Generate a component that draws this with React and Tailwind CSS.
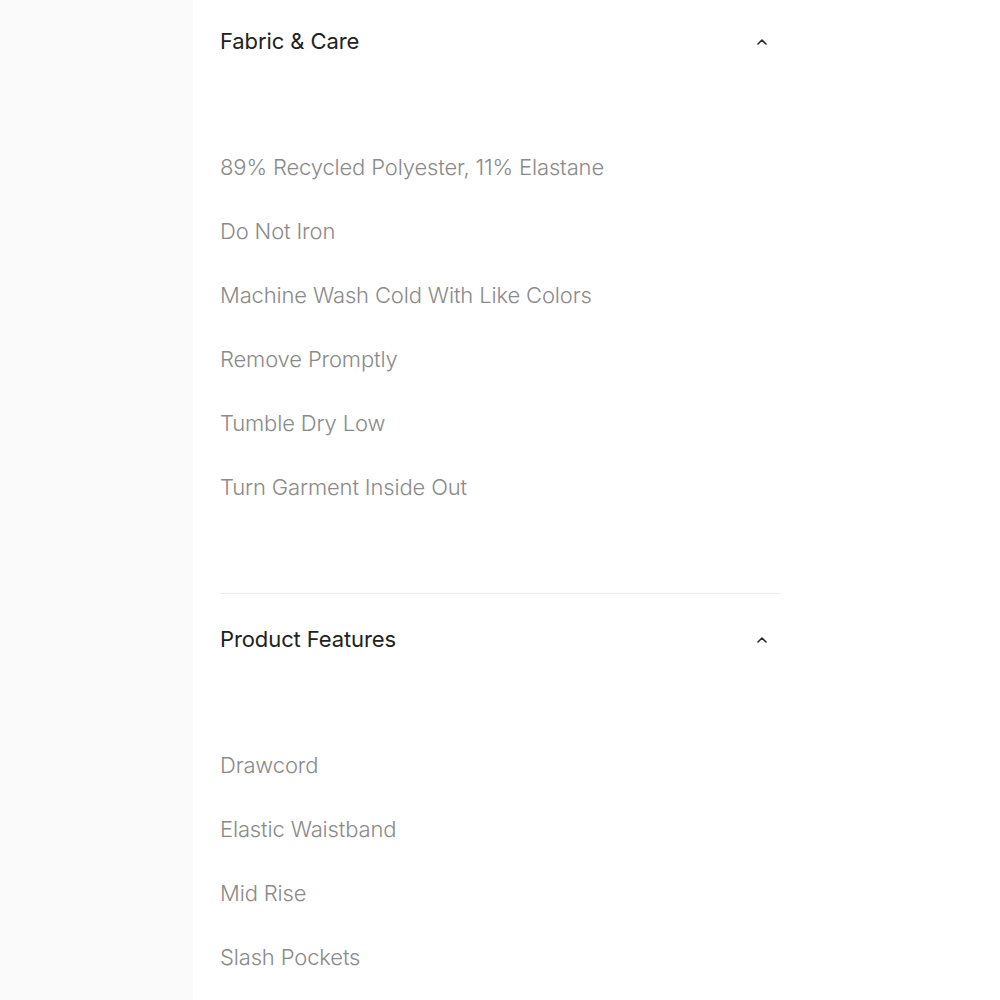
import React from "react";

const sections = [
  {
    title: "Fabric & Care",
    items: [
      "89% Recycled Polyester, 11% Elastane",
      "Do Not Iron",
      "Machine Wash Cold With Like Colors",
      "Remove Promptly",
      "Tumble Dry Low",
      "Turn Garment Inside Out",
    ],
  },
  {
    title: "Product Features",
    items: ["Drawcord", "Elastic Waistband", "Mid Rise", "Slash Pockets"],
  },
];

function Chevron() {
  return (
    <svg width="12" height="8" viewBox="0 0 12 8" fill="none" className="mr-[13px]">
      <path d="M2 6 L6 2 L10 6" stroke="#2a2a2a" strokeWidth="1.6" strokeLinecap="round" strokeLinejoin="round" />
    </svg>
  );
}

export default function App() {
  return (
    <div className="flex w-[1000px] h-[1000px] overflow-hidden bg-white" style={{ fontFamily: "Inter, 'Noto Sans', sans-serif" }}>
      <div className="w-[193px] shrink-0 bg-[#fafafa]" />
      <div className="w-[561px] ml-[27px] mt-[-3px]">
        {sections.map((s, i) => (
          <div key={s.title} className={i > 0 ? "border-t border-[#ececec] pt-px" : ""}>
            <div className="h-[89px] flex items-center justify-between">
              <span className="text-[22px] text-[#222222] tracking-[-0.1px]">{s.title}</span>
              <Chevron />
            </div>
            <ul className="pt-[49px] pb-[74px]">
              {s.items.map((it) => (
                <li key={it} className="h-[64px] flex items-center text-[22px] font-light text-[#8a8a8a] tracking-[-0.15px]">
                  {it}
                </li>
              ))}
            </ul>
          </div>
        ))}
      </div>
    </div>
  );
}
